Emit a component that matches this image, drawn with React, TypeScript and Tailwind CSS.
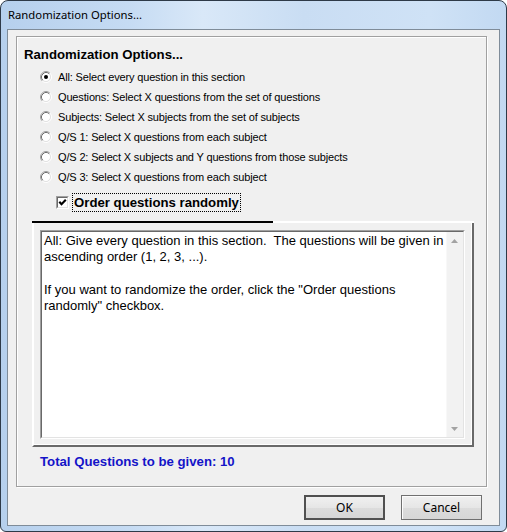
import React from "react";

const options = [
  "All: Select every question in this section",
  "Questions: Select X questions from the set of questions",
  "Subjects: Select X subjects from the set of subjects",
  "Q/S 1: Select X questions from each subject",
  "Q/S 2: Select X subjects and Y questions from those subjects",
  "Q/S 3: Select X questions from each subject",
];

const helpLines = [
  "All: Give every question in this section.  The questions will be given in",
  "ascending order (1, 2, 3, ...).",
  "",
  'If you want to randomize the order, click the "Order questions',
  'randomly" checkbox.',
];

function Radio({ checked }: { checked?: boolean }) {
  return (
    <svg width="12" height="12" viewBox="0 0 12 12" className="shrink-0">
      <circle cx="6" cy="6" r="4.2" fill="#fff" />
      <path d="M2.11 9.89A5.5 5.5 0 0 1 9.89 2.11" fill="none" stroke="#a0a0a0" />
      <path d="M9.89 2.11A5.5 5.5 0 0 1 2.11 9.89" fill="none" stroke="#fff" />
      <path d="M2.82 9.18A4.5 4.5 0 0 1 9.18 2.82" fill="none" stroke="#707070" />
      <path d="M9.18 2.82A4.5 4.5 0 0 1 2.82 9.18" fill="none" stroke="#e3e3e3" />
      {checked && <circle cx="6" cy="6" r="2" fill="#000" />}
    </svg>
  );
}

function Checkbox() {
  return (
    <span className="flex h-[13px] w-[13px] shrink-0 border border-t-[#a0a0a0] border-l-[#a0a0a0] border-r-white border-b-white">
      <span className="flex flex-1 items-center justify-center border border-t-[#696969] border-l-[#696969] border-r-[#e3e3e3] border-b-[#e3e3e3] bg-white">
        <svg width="9" height="9" viewBox="0 0 9 9">
          <polyline points="1.3,3.8 3.5,6.3 7.8,1.7" fill="none" stroke="#000" strokeWidth="2.1" />
        </svg>
      </span>
    </span>
  );
}

function Arrow({ up }: { up?: boolean }) {
  return (
    <svg width="7" height="4" viewBox="0 0 7 4">
      <polygon points={up ? "0,4 3.5,0 7,4" : "0,0 3.5,4 7,0"} fill="#a3a3a3" />
    </svg>
  );
}

function Button({ label, isDefault }: { label: string; isDefault?: boolean }) {
  return (
    <button
      className={
        isDefault
          ? "flex h-[25px] w-[81px] items-center justify-center border-2 border-[#505050] bg-[linear-gradient(#f0f0f0,#e6e6e6_50%,#dcdcdc_51%,#d6d6d6)] text-[12px] text-black"
          : "flex h-[25px] w-[81px] items-center justify-center border border-[#707070] bg-[linear-gradient(#f0f0f0,#e6e6e6_50%,#dcdcdc_51%,#d6d6d6)] text-[12px] text-black shadow-[inset_1px_1px_0_#fcfcfc]"
      }
    >
      {label}
    </button>
  );
}

export default function App() {
  return (
    <div className="h-[532px] w-[507px] bg-white font-['Liberation_Sans',Arial,sans-serif]">
      <div className="flex h-[532px] w-[507px] flex-col rounded-t-[8px] rounded-b-[6px] border border-[#2e3a48] bg-[linear-gradient(90deg,#b6d0ed_0%,#c5dbf3_25%,#d9e8f8_40%,#c9ddf3_60%,#cfe2f6_85%,#c2d9f2_100%)] px-[6px] pb-[5px]">
        <div className="flex h-[28px] items-center pl-[1px] font-['Noto_Sans',sans-serif] text-[11.3px] text-black">
          Randomization Options...
        </div>

        <div className="flex h-[497px] flex-col border border-[#7f8c99] bg-[#f0f0f0]">
          <div className="ml-[8px] mt-[6px] flex h-[451px] w-[471px] flex-col border border-[#a0a0a0] shadow-[1px_1px_0_#fff,inset_1px_1px_0_#fff]">
            <div className="pl-[7px] pt-[10px] text-[13.2px] font-bold leading-[16px] text-black">
              Randomization Options...
            </div>

            <ul className="mt-[4px] pl-[23px]">
              {options.map((o, i) => (
                <li key={o} className="flex h-[20px] items-center gap-[6px]">
                  <Radio checked={i === 0} />
                  <span className="text-[11px] leading-[20px] tracking-[-0.15px] text-black">{o}</span>
                </li>
              ))}
            </ul>

            <div className="mt-[5px] flex h-[20px] items-center pl-[39px]">
              <Checkbox />
              <span className="ml-[3px] border border-dotted border-black px-[1px] text-[13.2px] font-bold leading-[17px] text-black">
                Order questions randomly
              </span>
            </div>

            <div className="ml-[15px] mt-[9px] flex h-[226px] w-[442px] flex-col border-b-2 border-l-2 border-r-2 border-b-[#696969] border-l-white border-r-[#696969] shadow-[inset_-1px_-1px_0_#fff]">
              <div className="-ml-[2px] -mr-[2px] flex h-[2px] shrink-0">
                <div className="w-[241px] bg-black" />
                <div className="flex-1 bg-white" />
              </div>
              <div className="ml-[6px] mt-[7px] flex h-[209px] w-[425px] border border-t-[#a0a0a0] border-l-[#a0a0a0] border-r-white border-b-white">
                <div className="flex flex-1 border border-t-[#696969] border-l-[#696969] border-r-[#e3e3e3] border-b-[#e3e3e3] bg-white">
                  <div className="flex-1 pl-[2px] pt-[1px] text-[13px] leading-[16.2px] text-black">
                    {helpLines.map((l, i) => (
                      <div key={i} className="h-[16.2px] whitespace-pre">
                        {l}
                      </div>
                    ))}
                  </div>
                  <div className="flex w-[17px] flex-col justify-between bg-[#f2f2f2] shadow-[inset_1px_0_0_#f8f8f8]">
                    <div className="flex h-[17px] items-center justify-center">
                      <Arrow up />
                    </div>
                    <div className="flex h-[17px] items-center justify-center">
                      <Arrow />
                    </div>
                  </div>
                </div>
              </div>
            </div>

            <div className="mt-[5px] pl-[23px] text-[13.2px] font-bold leading-[20px] text-[#1414c8]">
              Total Questions to be given: 10
            </div>
          </div>

          <div className="mt-[8px] flex justify-end gap-[16px] pr-[17px] font-['Noto_Sans',sans-serif]">
            <Button label="OK" isDefault />
            <Button label="Cancel" />
          </div>
        </div>
      </div>
    </div>
  );
}
